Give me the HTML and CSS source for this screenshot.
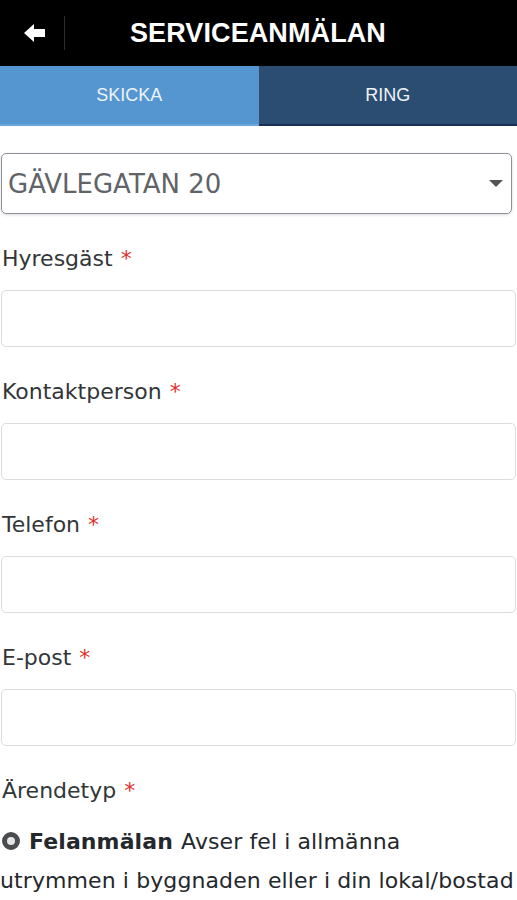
FILE: index.html
```html
<!DOCTYPE html>
<html lang="sv">
<head>
<meta charset="utf-8">
<title>Serviceanmälan</title>
<link rel="stylesheet" href="styles.css">
</head>
<body>
<header class="topbar">
  <button class="back" aria-label="Tillbaka">
    <svg width="22" height="20" viewBox="0 0 22 20"><path d="M0 10 L10 1 L10 6 L21 6 L21 14 L10 14 L10 19 Z" fill="#fff"/></svg>
  </button>
  <span class="divider"></span>
  <h1 class="title">SERVICEANMÄLAN</h1>
</header>
<nav class="tabs">
  <div class="tab tab-active">SKICKA</div>
  <div class="tab tab-ring">RING</div>
</nav>
<main class="form">
  <div class="select">
    <span class="select-text">GÄVLEGATAN 20</span>
    <span class="caret"></span>
  </div>
  <div class="field">
    <label class="label">Hyresgäst <span class="req">*</span></label>
    <div class="input"></div>
  </div>
  <div class="field">
    <label class="label">Kontaktperson <span class="req">*</span></label>
    <div class="input"></div>
  </div>
  <div class="field">
    <label class="label">Telefon <span class="req">*</span></label>
    <div class="input"></div>
  </div>
  <div class="field">
    <label class="label">E-post <span class="req">*</span></label>
    <div class="input"></div>
  </div>
  <div class="field">
    <label class="label">Ärendetyp <span class="req">*</span></label>
    <p class="radio-line"><span class="radio"></span><b>Felanmälan</b> Avser fel i allmänna<br><span class="nowrap">utrymmen i byggnaden eller i din lokal/bostad</span></p>
  </div>
</main>
</body>
</html>
```
FILE: styles.css
```css
html, body {
  margin: 0;
  padding: 0;
  background: #fff;
}
body {
  width: 517px;
  overflow: hidden;
  font-family: "DejaVu Sans", "Noto Sans", sans-serif;
}
.topbar {
  height: 66px;
  background: #000;
  display: flex;
  align-items: center;
}
.back {
  background: none;
  border: 0;
  padding: 0;
  margin-left: 24px;
  width: 22px;
  height: 20px;
  display: flex;
}
.divider {
  width: 1px;
  height: 34px;
  background: #2e2e2e;
  margin-left: 18px;
}
.title {
  margin: 0 0 0 65px;
  color: #fff;
  font-family: "Liberation Sans", Arial, sans-serif;
  font-weight: bold;
  font-size: 27px;
  letter-spacing: 0.1px;
}
.tabs {
  display: flex;
  height: 60px;
}
.tab {
  flex: 1;
  display: flex;
  align-items: center;
  justify-content: center;
  font-family: "Liberation Sans", Arial, sans-serif;
  font-size: 18px;
  color: #eef3fa;
}
.tab-active {
  background: #5596d0;
  border-bottom: 2px solid #6aa6dc;
}
.tab-ring {
  background: #2c4d72;
  border-bottom: 2px solid #1a2f55;
}
.form {
  padding: 27px 1px 0 1px;
}
.select {
  height: 59px;
  width: 503px;
  border: 1px solid #8e9298;
  border-radius: 5px;
  box-shadow: 0 1px 3px rgba(0,0,0,0.15);
  display: flex;
  align-items: center;
  justify-content: space-between;
  padding: 0 0 0 6px;
}
.select-text {
  font-size: 26px;
  color: #606367;
}
.caret {
  width: 0;
  height: 0;
  border-left: 7px solid transparent;
  border-right: 7px solid transparent;
  border-top: 7px solid #555;
  margin-right: 8px;
}
.field {
  margin-top: 30px;
}
.label {
  display: block;
  height: 30px;
  line-height: 30px;
  font-size: 22px;
  color: #333639;
  padding-left: 1px;
}
.req {
  color: #e0302a;
  margin-left: 1px;
}
.input {
  margin-top: 16px;
  height: 55px;
  border: 1px solid #dcdcdc;
  border-radius: 5px;
  background: #fff;
}
.radio-line {
  margin: 16px -1px 0 -1px;
  font-size: 22px;
  letter-spacing: 0.1px;
  line-height: 39px;
  color: #24282c;
}
.nowrap {
  white-space: nowrap;
}
.radio-line b {
  margin-right: 1px;
}
.radio {
  display: inline-block;
  width: 8px;
  height: 8px;
  border: 5px solid #4a4c4f;
  border-radius: 50%;
  background: #e6e6e6;
  vertical-align: -1px;
  margin: 0 9px 0 2px;
}
```
